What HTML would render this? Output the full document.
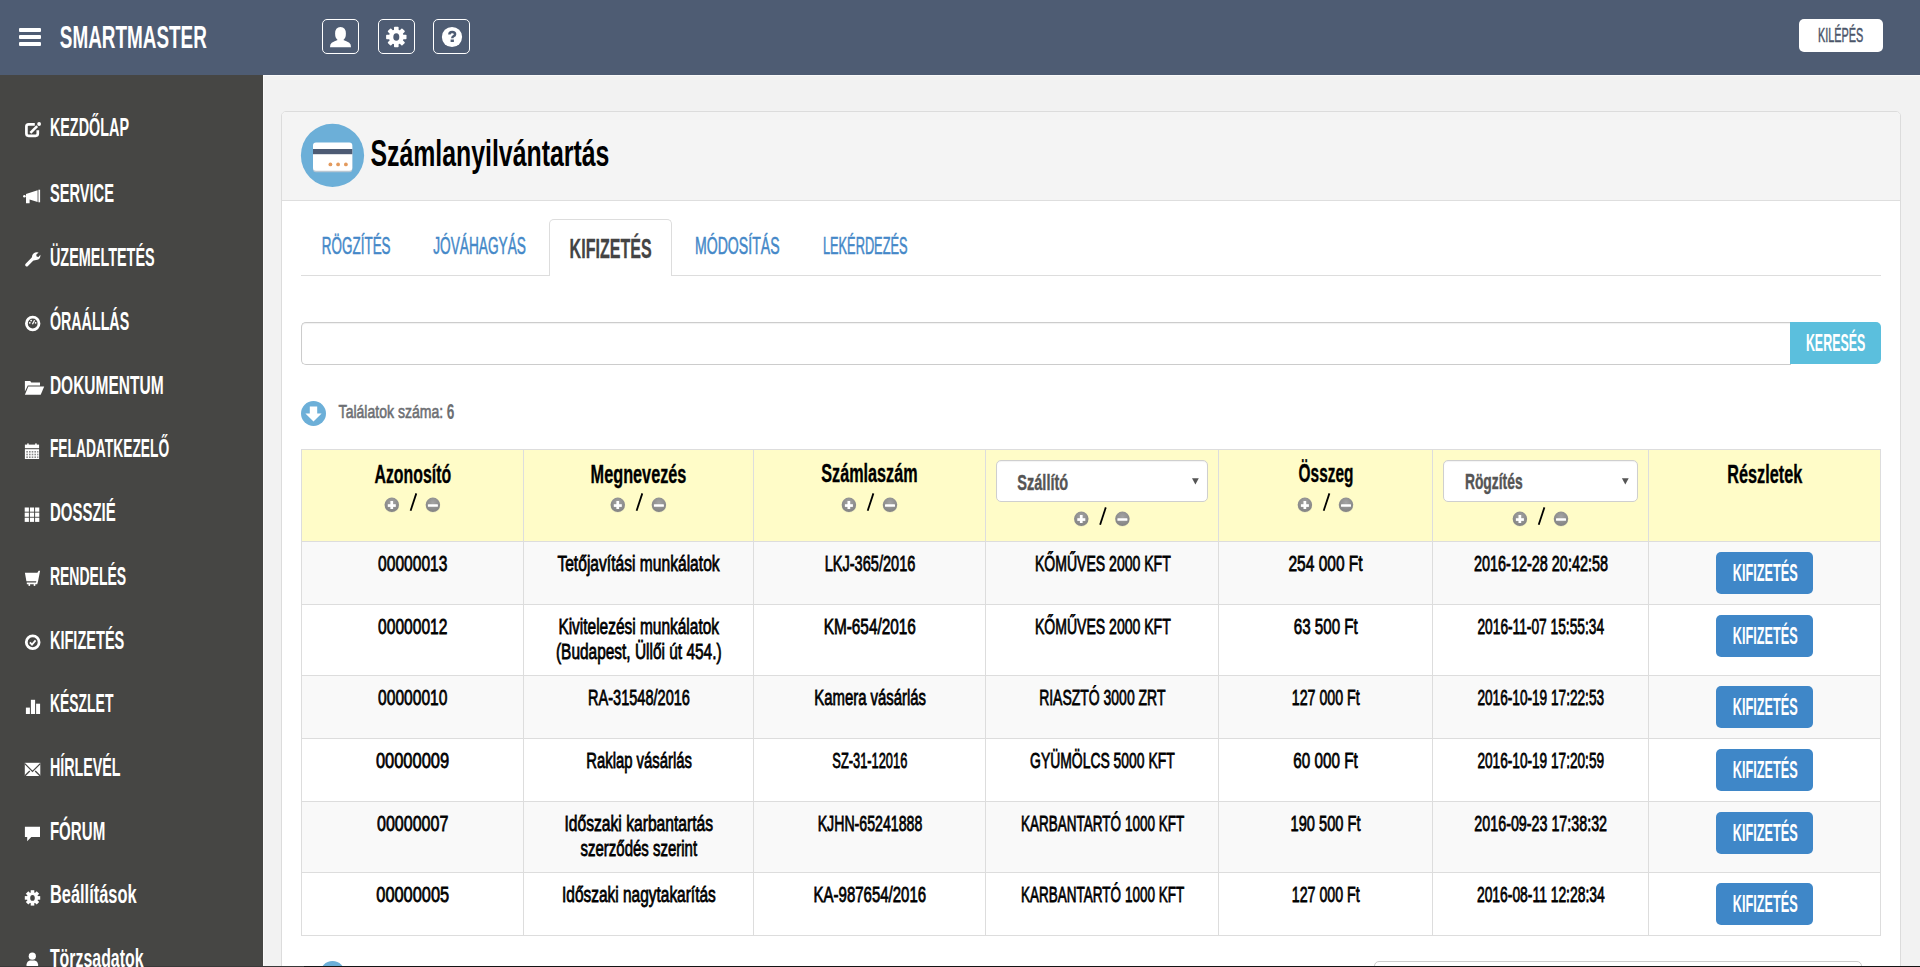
<!DOCTYPE html>
<html><head><meta charset="utf-8"><title>Számlanyilvántartás</title>
<style>
html,body{margin:0;padding:0;width:1920px;height:967px;overflow:hidden;background:#f2f2f2;font-family:"Liberation Sans",sans-serif}
.a{position:absolute;box-sizing:border-box}
.ib{border:1.8px solid #fff;border-radius:5px;width:37px;height:35.2px;top:18.7px}
.sel{background:#fff;border:1px solid #cfcfcf;border-radius:5px;box-shadow:inset 0 1px 1px rgba(0,0,0,.05)}
.btn{background:#3f87c8;border-radius:5px;width:97px;height:41.5px;left:1716px}
</style></head><body>
<!-- header -->
<div class="a" style="left:0;top:0;width:1920px;height:75px;background:#4e5c73"></div>
<div class="a" style="left:18.75px;top:28px;width:22.5px;height:4px;background:#fff;border-radius:1px"></div>
<div class="a" style="left:18.75px;top:35px;width:22.5px;height:4px;background:#fff;border-radius:1px"></div>
<div class="a" style="left:18.75px;top:42px;width:22.5px;height:4px;background:#fff;border-radius:1px"></div>
<div class="a ib" style="left:321.8px"></div>
<div class="a ib" style="left:377.8px"></div>
<div class="a ib" style="left:432.8px"></div>
<div class="a" style="left:1799px;top:19px;width:84px;height:33px;background:#fff;border-radius:5px"></div>
<!-- sidebar -->
<div class="a" style="left:0;top:75px;width:263px;height:892px;background:#464644"></div>
<div class="a" style="left:263px;top:75px;width:1657px;height:1px;background:#fafafa"></div>
<div class="a" style="left:263px;top:75px;width:1px;height:892px;background:#fafafa"></div>
<!-- panel -->
<div class="a" style="left:281px;top:111px;width:1620px;height:900px;background:#fff;border:1px solid #dcdcdc;border-radius:5px"></div>
<div class="a" style="left:282px;top:112px;width:1618px;height:89px;background:#f4f4f4;border-bottom:1px solid #dedede;border-radius:4px 4px 0 0"></div>
<!-- tabs -->
<div class="a" style="left:301px;top:275px;width:1580px;height:1px;background:#dddddd"></div>
<div class="a" style="left:549px;top:219px;width:123px;height:57px;background:#fff;border:1px solid #dddddd;border-bottom:none;border-radius:5px 5px 0 0"></div>
<!-- search -->
<div class="a" style="left:301px;top:322px;width:1490px;height:43px;background:#fff;border:1px solid #cccccc;border-right:none;border-radius:5px 0 0 5px;box-shadow:inset 0 1px 1px rgba(0,0,0,.06)"></div>
<div class="a" style="left:1790px;top:322px;width:91px;height:42px;background:#5bbfdd;border-radius:0 5px 5px 0"></div>
<!-- table -->
<div class="a" style="left:301px;top:449px;width:1580px;height:487px;background:#fff;border:1px solid #dddddd"></div>
<div class="a" style="left:302px;top:450px;width:1578px;height:91px;background:#fffcc8"></div>
<div class="a" style="left:302px;top:542px;width:1578px;height:62px;background:#f9f9f9"></div>
<div class="a" style="left:302px;top:676px;width:1578px;height:62px;background:#f9f9f9"></div>
<div class="a" style="left:302px;top:802px;width:1578px;height:70px;background:#f9f9f9"></div>
<div class="a" style="left:302px;top:541px;width:1578px;height:1px;background:#dddddd"></div>
<div class="a" style="left:302px;top:604px;width:1578px;height:1px;background:#dddddd"></div>
<div class="a" style="left:302px;top:675px;width:1578px;height:1px;background:#dddddd"></div>
<div class="a" style="left:302px;top:738px;width:1578px;height:1px;background:#dddddd"></div>
<div class="a" style="left:302px;top:801px;width:1578px;height:1px;background:#dddddd"></div>
<div class="a" style="left:302px;top:872px;width:1578px;height:1px;background:#dddddd"></div>
<div class="a" style="left:523px;top:450px;width:1px;height:485px;background:#dddddd"></div>
<div class="a" style="left:753px;top:450px;width:1px;height:485px;background:#dddddd"></div>
<div class="a" style="left:985px;top:450px;width:1px;height:485px;background:#dddddd"></div>
<div class="a" style="left:1218px;top:450px;width:1px;height:485px;background:#dddddd"></div>
<div class="a" style="left:1432px;top:450px;width:1px;height:485px;background:#dddddd"></div>
<div class="a" style="left:1648px;top:450px;width:1px;height:485px;background:#dddddd"></div>
<div class="a sel" style="left:996px;top:460px;width:212px;height:42px"></div>
<div class="a sel" style="left:1443px;top:460px;width:195px;height:42px"></div>
<div class="a btn" style="top:552px"></div>
<div class="a btn" style="top:615px"></div>
<div class="a btn" style="top:686px"></div>
<div class="a btn" style="top:749px"></div>
<div class="a btn" style="top:812px"></div>
<div class="a btn" style="top:883px"></div>
<!-- bottom partial -->
<div class="a" style="left:1374px;top:961px;width:488px;height:30px;background:#fff;border:1px solid #cccccc;border-radius:5px"></div>
<!-- icons + text overlay -->
<svg class="a" style="left:0;top:0" width="1920" height="967" viewBox="0 0 1920 967" font-family="Liberation Sans">
<defs>
<radialGradient id="gb" cx="50%" cy="35%" r="60%"><stop offset="0" stop-color="#a3a3a3"/><stop offset="1" stop-color="#858585"/></radialGradient>
<g id="pm">
 <circle cx="-20.6" cy="0.8" r="7.4" fill="#e8e6c0" opacity=".6"/>
 <circle cx="-20.6" cy="0" r="7.2" fill="url(#gb)"/>
 <rect x="-24.6" y="-0.6" width="8" height="2.7" fill="#fff"/>
 <rect x="-22" y="-3.8" width="2.7" height="8" fill="#fff"/>
 <line x1="-1.8" y1="5.9" x2="3.9" y2="-11.4" stroke="#000" stroke-width="1.8"/>
 <circle cx="20.5" cy="0.8" r="7.4" fill="#e8e6c0" opacity=".6"/>
 <circle cx="20.5" cy="0" r="7.2" fill="url(#gb)"/>
 <rect x="15.5" y="-0.6" width="10" height="2.6" rx="0.5" fill="#fff"/>
</g>
</defs>
<!-- header icons -->
<g fill="#fff">
 <path d="M330 47.2 L330.4 44.6 Q331 42.6 334.6 41.2 L337.6 39.9 Q335.1 38.2 335.1 33.6 Q335.1 26.9 340.5 26.9 Q345.9 26.9 345.9 33.6 Q345.9 38.2 343.4 39.9 L346.4 41.2 Q350 42.6 350.6 44.6 L351 47.2 Z"/>
 <g transform="translate(396.3 37)">
  <circle r="7.4"/>
  <rect x="-2.3" y="-10.2" width="4.6" height="20.4" rx="0.8"/>
  <rect x="-2.3" y="-10.2" width="4.6" height="20.4" rx="0.8" transform="rotate(45)"/>
  <rect x="-2.3" y="-10.2" width="4.6" height="20.4" rx="0.8" transform="rotate(90)"/>
  <rect x="-2.3" y="-10.2" width="4.6" height="20.4" rx="0.8" transform="rotate(135)"/>
  <ellipse rx="3" ry="3.8" fill="#4e5c73"/>
 </g>
 <circle cx="452" cy="37" r="10.1"/>
</g>
<path d="M449.4 34.4 Q449.4 31.9 452.2 31.9 Q455.1 31.9 455.1 34.2 Q455.1 35.6 453.3 36.3 Q452.3 36.7 452.3 38.2" fill="none" stroke="#4e5c73" stroke-width="2.5"/>
<rect x="450.6" y="39.5" width="3.3" height="2.5" fill="#4e5c73"/>
<!-- sidebar icons -->
<g fill="#fff" stroke="none">
 <!-- edit -->
 <path d="M34.8 124.4 H28.6 Q26.4 124.4 26.4 126.6 V133.6 Q26.4 135.8 28.6 135.8 H35.6 Q37.8 135.8 37.8 133.6 V130.2" fill="none" stroke="#fff" stroke-width="2.7"/>
 <path d="M30.4 132.9 L37.2 126.1" stroke="#fff" stroke-width="2.6"/>
 <circle cx="39.1" cy="124" r="1.9"/>
 <!-- megaphone -->
 <path d="M26 193.9 L37.6 190.2 V202 L29.6 199.4 V203.2 H26 Z"/>
 <rect x="38.4" y="189.7" width="1.7" height="12.6"/>
 <circle cx="24.4" cy="196.2" r="1.3"/>
 <!-- wrench -->
 <path d="M26.8 264.8 L33.2 258.4" stroke="#fff" stroke-width="3.3" stroke-linecap="round"/>
 <path d="M31.6 259.4 L32.2 255.6 Q33.2 252.4 36.8 252.2 L38.6 252.4 L36.2 254.8 L36.6 256.6 L38.4 257 L40.4 254.8 Q40.6 258.8 37.4 259.8 L33.8 260.6 Z"/>
 <!-- gauge -->
 <circle cx="32.7" cy="323.5" r="6.3" fill="none" stroke="#fff" stroke-width="2.8"/>
 <circle cx="29.8" cy="322.8" r="0.9"/><circle cx="31.1" cy="320.6" r="0.9"/><circle cx="35.6" cy="322.8" r="0.9"/>
 <path d="M32.4 324.3 L34.6 320.3" stroke="#fff" stroke-width="1.3"/>
 <!-- folder -->
 <path d="M24.9 381 H30.2 L31.3 382.4 H40 V385.6 H27.8 L24.9 391.6 Z"/>
 <path d="M28.3 386.4 H44.2 L40.7 394.8 H24.9 Z"/>
 <!-- calendar -->
 <rect x="24.9" y="444.6" width="14.2" height="3.6"/>
 <rect x="27.2" y="443.4" width="1.5" height="2"/><rect x="35.2" y="443.4" width="1.5" height="2"/>
 <rect x="24.9" y="449.2" width="14.2" height="9.8"/>
 <!-- grid -->
 <rect x="24.7" y="507.5" width="4.2" height="4.2"/><rect x="29.9" y="507.5" width="4.2" height="4.2"/><rect x="35.1" y="507.5" width="4.2" height="4.2"/>
 <rect x="24.7" y="512.6" width="4.2" height="4.2"/><rect x="29.9" y="512.6" width="4.2" height="4.2"/><rect x="35.1" y="512.6" width="4.2" height="4.2"/>
 <rect x="24.7" y="517.7" width="4.2" height="4.2"/><rect x="29.9" y="517.7" width="4.2" height="4.2"/><rect x="35.1" y="517.7" width="4.2" height="4.2"/>
 <!-- cart -->
 <path d="M24.9 572.8 H37.4 L38.6 570.8 H40.1 L38 581.4 L37.2 584.2 H26.8 V582.6 H36 L36.3 581.2 H26.4 Z"/>
 <rect x="28.5" y="584" width="1.6" height="1.9"/><rect x="33.7" y="584" width="1.6" height="1.9"/>
 <!-- check circle -->
 <circle cx="32.7" cy="642.3" r="6.4" fill="none" stroke="#fff" stroke-width="2.8"/>
 <path d="M29.9 642.3 L32 644.6 L35.6 640.4" fill="none" stroke="#fff" stroke-width="1.8"/>
 <!-- bar chart -->
 <rect x="25.9" y="707.6" width="4" height="6.4"/><rect x="30.9" y="699.8" width="4.2" height="14.2"/><rect x="36.1" y="703.7" width="4" height="10.3"/>
 <!-- envelope -->
 <rect x="24.8" y="762.8" width="15.5" height="13.2"/>
 <!-- comment -->
 <path d="M24.9 826.8 H40 V837 H31.3 L27.2 841.3 V837 H24.9 Z"/>
 <!-- gear -->
 <g transform="translate(32.5 897.9)">
  <circle r="5.6"/>
  <rect x="-1.8" y="-7.7" width="3.6" height="15.4"/>
  <rect x="-1.8" y="-7.7" width="3.6" height="15.4" transform="rotate(45)"/>
  <rect x="-1.8" y="-7.7" width="3.6" height="15.4" transform="rotate(90)"/>
  <rect x="-1.8" y="-7.7" width="3.6" height="15.4" transform="rotate(135)"/>
  <ellipse rx="2.3" ry="2.9" fill="#464644"/>
 </g>
 <!-- user -->
 <circle cx="32.3" cy="956.2" r="3.6"/>
 <path d="M26.5 967 V964.5 Q27 961.2 30 960.6 H34.6 Q37.6 961.2 38.1 964.5 V967 Z"/>
</g>
<g fill="none" stroke="#464644" stroke-width="1.3">
 <path d="M24.8 763.6 L32.5 771.4 L40.3 763.6"/>
 <path d="M24.8 776 L29.8 771"/><path d="M40.3 776 L35.2 771"/>
</g>
<g fill="#8a8a8a">
 <rect x="26.3" y="451" width="1.6" height="1.6"/><rect x="29" y="451" width="1.6" height="1.6"/><rect x="31.7" y="451" width="1.6" height="1.6"/><rect x="34.4" y="451" width="1.6" height="1.6"/><rect x="37.1" y="451" width="1.3" height="1.6"/>
 <rect x="26.3" y="453.7" width="1.6" height="1.6"/><rect x="29" y="453.7" width="1.6" height="1.6"/><rect x="31.7" y="453.7" width="1.6" height="1.6"/><rect x="34.4" y="453.7" width="1.6" height="1.6"/><rect x="37.1" y="453.7" width="1.3" height="1.6"/>
 <rect x="26.3" y="456.4" width="1.6" height="1.6"/><rect x="29" y="456.4" width="1.6" height="1.6"/><rect x="31.7" y="456.4" width="1.6" height="1.6"/><rect x="34.4" y="456.4" width="1.6" height="1.6"/><rect x="37.1" y="456.4" width="1.3" height="1.6"/>
</g>
<!-- title icon -->
<circle cx="332.5" cy="155.4" r="31.6" fill="#6cafd8"/>
<rect x="313" y="144" width="39.3" height="28.2" rx="3" fill="#b8c7d3"/>
<rect x="313" y="142.5" width="39.3" height="28.3" rx="3" fill="#fff"/>
<rect x="313" y="149" width="39.3" height="5.2" fill="#4d5b74"/>
<circle cx="330.4" cy="164.4" r="1.9" fill="#e39a5e"/><circle cx="338.1" cy="164.4" r="1.9" fill="#e39a5e"/><circle cx="345.9" cy="164.4" r="1.9" fill="#e39a5e"/>
<!-- results icon -->
<circle cx="313.5" cy="413.5" r="12.5" fill="#6cafd8"/>
<path d="M309.8 406.4 H317.2 V413.4 H321.6 L313.5 421.4 L305.4 413.4 H309.8 Z" fill="#fff"/>
<!-- select arrows -->
<path d="M1192 478.2 H1198.8 L1195.4 484.4 Z" fill="#555"/>
<path d="M1621.9 478.2 H1628.7 L1625.3 484.4 Z" fill="#555"/>
<!-- plus/minus -->
<use href="#pm" x="412.4" y="504.8"/>
<use href="#pm" x="638.4" y="504.8"/>
<use href="#pm" x="869.5" y="504.8"/>
<use href="#pm" x="1101.9" y="518.8"/>
<use href="#pm" x="1325.5" y="504.8"/>
<use href="#pm" x="1540.5" y="518.8"/>
<!-- bottom partial circle -->
<circle cx="332.5" cy="973.5" r="12.5" fill="#6cafd8"/>
<rect x="0" y="966" width="304" height="1" fill="#393939"/><rect x="304" y="966" width="1616" height="1" fill="#141414"/>
<text x="59.80" y="48.00" font-size="32.12" font-weight="bold" fill="#fff" textLength="147.06" lengthAdjust="spacingAndGlyphs">SMARTMASTER</text>
<text x="1818.04" y="41.75" font-size="19.77" font-weight="normal" fill="#4b5569" textLength="45.32" lengthAdjust="spacingAndGlyphs" stroke="#4b5569" stroke-width="0.5">KILÉPÉS</text>
<text x="49.90" y="136.10" font-size="25.58" font-weight="bold" fill="#fff" textLength="79.10" lengthAdjust="spacingAndGlyphs">KEZDŐLAP</text>
<text x="49.90" y="202.20" font-size="25.58" font-weight="bold" fill="#fff" textLength="64.03" lengthAdjust="spacingAndGlyphs">SERVICE</text>
<text x="49.90" y="266.10" font-size="25.58" font-weight="bold" fill="#fff" textLength="104.79" lengthAdjust="spacingAndGlyphs">ÜZEMELTETÉS</text>
<text x="49.90" y="329.70" font-size="25.58" font-weight="bold" fill="#fff" textLength="79.30" lengthAdjust="spacingAndGlyphs">ÓRAÁLLÁS</text>
<text x="49.90" y="394.10" font-size="25.58" font-weight="bold" fill="#fff" textLength="113.76" lengthAdjust="spacingAndGlyphs">DOKUMENTUM</text>
<text x="49.90" y="457.00" font-size="25.58" font-weight="bold" fill="#fff" textLength="119.27" lengthAdjust="spacingAndGlyphs">FELADATKEZELŐ</text>
<text x="49.90" y="521.10" font-size="25.58" font-weight="bold" fill="#fff" textLength="65.90" lengthAdjust="spacingAndGlyphs">DOSSZIÉ</text>
<text x="49.90" y="584.70" font-size="25.58" font-weight="bold" fill="#fff" textLength="76.31" lengthAdjust="spacingAndGlyphs">RENDELÉS</text>
<text x="49.90" y="648.80" font-size="25.58" font-weight="bold" fill="#fff" textLength="74.42" lengthAdjust="spacingAndGlyphs">KIFIZETÉS</text>
<text x="49.90" y="712.20" font-size="25.58" font-weight="bold" fill="#fff" textLength="63.51" lengthAdjust="spacingAndGlyphs">KÉSZLET</text>
<text x="49.90" y="775.80" font-size="25.58" font-weight="bold" fill="#fff" textLength="70.70" lengthAdjust="spacingAndGlyphs">HÍRLEVÉL</text>
<text x="49.90" y="839.60" font-size="25.58" font-weight="bold" fill="#fff" textLength="55.32" lengthAdjust="spacingAndGlyphs">FÓRUM</text>
<text x="49.90" y="903.40" font-size="25.58" font-weight="bold" fill="#fff" textLength="86.72" lengthAdjust="spacingAndGlyphs">Beállítások</text>
<text x="49.90" y="967.00" font-size="25.58" font-weight="bold" fill="#fff" textLength="93.63" lengthAdjust="spacingAndGlyphs">Törzsadatok</text>
<text x="370.40" y="166.00" font-size="36.63" font-weight="bold" fill="#000" textLength="238.92" lengthAdjust="spacingAndGlyphs">Számlanyilvántartás</text>
<text x="321.85" y="253.72" font-size="24.35" font-weight="normal" fill="#4488c8" textLength="68.72" lengthAdjust="spacingAndGlyphs" stroke="#4488c8" stroke-width="0.55">RÖGZÍTÉS</text>
<text x="433.15" y="253.72" font-size="24.35" font-weight="normal" fill="#4488c8" textLength="92.79" lengthAdjust="spacingAndGlyphs" stroke="#4488c8" stroke-width="0.55">JÓVÁHAGYÁS</text>
<text x="569.59" y="257.55" font-size="27.62" font-weight="bold" fill="#444" textLength="82.05" lengthAdjust="spacingAndGlyphs" stroke="#444" stroke-width="0.3">KIFIZETÉS</text>
<text x="694.96" y="253.72" font-size="24.35" font-weight="normal" fill="#4488c8" textLength="84.59" lengthAdjust="spacingAndGlyphs" stroke="#4488c8" stroke-width="0.55">MÓDOSÍTÁS</text>
<text x="822.94" y="253.72" font-size="24.35" font-weight="normal" fill="#4488c8" textLength="84.59" lengthAdjust="spacingAndGlyphs" stroke="#4488c8" stroke-width="0.55">LEKÉRDEZÉS</text>
<text x="1805.90" y="351.00" font-size="24.71" font-weight="bold" fill="#fff" textLength="59.39" lengthAdjust="spacingAndGlyphs">KERESÉS</text>
<text x="338.62" y="418.40" font-size="18.75" font-weight="normal" fill="#6d6f73" textLength="104.52" lengthAdjust="spacingAndGlyphs" stroke="#6d6f73" stroke-width="0.6">Találatok száma:</text>
<text x="446.70" y="419.00" font-size="21.51" font-weight="bold" fill="#6d6f73" textLength="7.62" lengthAdjust="spacingAndGlyphs">6</text>
<text x="374.51" y="482.93" font-size="24.93" font-weight="bold" fill="#000" textLength="76.59" lengthAdjust="spacingAndGlyphs" stroke="#000" stroke-width="0.35">Azonosító</text>
<text x="590.61" y="482.62" font-size="24.93" font-weight="bold" fill="#000" textLength="95.80" lengthAdjust="spacingAndGlyphs" stroke="#000" stroke-width="0.35">Megnevezés</text>
<text x="821.31" y="482.43" font-size="24.93" font-weight="bold" fill="#000" textLength="96.24" lengthAdjust="spacingAndGlyphs" stroke="#000" stroke-width="0.35">Számlaszám</text>
<text x="1298.61" y="482.32" font-size="24.93" font-weight="bold" fill="#000" textLength="54.82" lengthAdjust="spacingAndGlyphs" stroke="#000" stroke-width="0.35">Összeg</text>
<text x="1727.31" y="482.62" font-size="24.93" font-weight="bold" fill="#000" textLength="74.97" lengthAdjust="spacingAndGlyphs" stroke="#000" stroke-width="0.35">Részletek</text>
<text x="1017.33" y="489.50" font-size="22.09" font-weight="bold" fill="#555" textLength="50.84" lengthAdjust="spacingAndGlyphs" stroke="#555" stroke-width="0.4">Szállító</text>
<text x="1464.88" y="489.20" font-size="21.51" font-weight="bold" fill="#555" textLength="57.77" lengthAdjust="spacingAndGlyphs" stroke="#555" stroke-width="0.4">Rögzítés</text>
<text x="378.08" y="571.30" font-size="22.38" font-weight="normal" fill="#000" textLength="69.33" lengthAdjust="spacingAndGlyphs" stroke="#000" stroke-width="0.8">00000013</text>
<text x="557.38" y="571.30" font-size="22.38" font-weight="normal" fill="#000" textLength="162.25" lengthAdjust="spacingAndGlyphs" stroke="#000" stroke-width="0.8">Tetőjavítási munkálatok</text>
<text x="824.66" y="571.30" font-size="22.38" font-weight="normal" fill="#000" textLength="90.71" lengthAdjust="spacingAndGlyphs" stroke="#000" stroke-width="0.8">LKJ-365/2016</text>
<text x="1034.95" y="571.30" font-size="22.38" font-weight="normal" fill="#000" textLength="135.80" lengthAdjust="spacingAndGlyphs" stroke="#000" stroke-width="0.8">KŐMŰVES 2000 KFT</text>
<text x="1288.48" y="571.30" font-size="22.38" font-weight="normal" fill="#000" textLength="74.17" lengthAdjust="spacingAndGlyphs" stroke="#000" stroke-width="0.8">254 000 Ft</text>
<text x="1473.96" y="571.30" font-size="22.38" font-weight="normal" fill="#000" textLength="134.10" lengthAdjust="spacingAndGlyphs" stroke="#000" stroke-width="0.8">2016-12-28 20:42:58</text>
<text x="378.08" y="634.40" font-size="22.38" font-weight="normal" fill="#000" textLength="69.33" lengthAdjust="spacingAndGlyphs" stroke="#000" stroke-width="0.8">00000012</text>
<text x="558.38" y="634.40" font-size="22.38" font-weight="normal" fill="#000" textLength="160.65" lengthAdjust="spacingAndGlyphs" stroke="#000" stroke-width="0.8">Kivitelezési munkálatok</text>
<text x="555.98" y="658.60" font-size="22.38" font-weight="normal" fill="#000" textLength="165.62" lengthAdjust="spacingAndGlyphs" stroke="#000" stroke-width="0.8">(Budapest, Üllői út 454.)</text>
<text x="823.67" y="634.40" font-size="22.38" font-weight="normal" fill="#000" textLength="92.24" lengthAdjust="spacingAndGlyphs" stroke="#000" stroke-width="0.8">KM-654/2016</text>
<text x="1034.95" y="634.40" font-size="22.38" font-weight="normal" fill="#000" textLength="135.80" lengthAdjust="spacingAndGlyphs" stroke="#000" stroke-width="0.8">KŐMŰVES 2000 KFT</text>
<text x="1293.77" y="634.40" font-size="22.38" font-weight="normal" fill="#000" textLength="63.96" lengthAdjust="spacingAndGlyphs" stroke="#000" stroke-width="0.8">63 500 Ft</text>
<text x="1477.45" y="634.40" font-size="22.38" font-weight="normal" fill="#000" textLength="126.63" lengthAdjust="spacingAndGlyphs" stroke="#000" stroke-width="0.8">2016-11-07 15:55:34</text>
<text x="378.08" y="705.00" font-size="22.38" font-weight="normal" fill="#000" textLength="69.33" lengthAdjust="spacingAndGlyphs" stroke="#000" stroke-width="0.8">00000010</text>
<text x="588.06" y="705.00" font-size="22.38" font-weight="normal" fill="#000" textLength="101.89" lengthAdjust="spacingAndGlyphs" stroke="#000" stroke-width="0.8">RA-31548/2016</text>
<text x="814.27" y="705.00" font-size="22.38" font-weight="normal" fill="#000" textLength="111.74" lengthAdjust="spacingAndGlyphs" stroke="#000" stroke-width="0.8">Kamera vásárlás</text>
<text x="1039.15" y="705.00" font-size="22.38" font-weight="normal" fill="#000" textLength="126.30" lengthAdjust="spacingAndGlyphs" stroke="#000" stroke-width="0.8">RIASZTÓ 3000 ZRT</text>
<text x="1291.75" y="705.00" font-size="22.38" font-weight="normal" fill="#000" textLength="68.01" lengthAdjust="spacingAndGlyphs" stroke="#000" stroke-width="0.8">127 000 Ft</text>
<text x="1477.44" y="705.00" font-size="22.38" font-weight="normal" fill="#000" textLength="126.63" lengthAdjust="spacingAndGlyphs" stroke="#000" stroke-width="0.8">2016-10-19 17:22:53</text>
<text x="375.89" y="768.30" font-size="22.38" font-weight="normal" fill="#000" textLength="73.30" lengthAdjust="spacingAndGlyphs" stroke="#000" stroke-width="0.8">00000009</text>
<text x="586.27" y="768.30" font-size="22.38" font-weight="normal" fill="#000" textLength="105.66" lengthAdjust="spacingAndGlyphs" stroke="#000" stroke-width="0.8">Raklap vásárlás</text>
<text x="832.33" y="768.30" font-size="22.38" font-weight="normal" fill="#000" textLength="74.97" lengthAdjust="spacingAndGlyphs" stroke="#000" stroke-width="0.8">SZ-31-12016</text>
<text x="1030.05" y="768.30" font-size="22.38" font-weight="normal" fill="#000" textLength="144.73" lengthAdjust="spacingAndGlyphs" stroke="#000" stroke-width="0.8">GYÜMÖLCS 5000 KFT</text>
<text x="1293.27" y="768.30" font-size="22.38" font-weight="normal" fill="#000" textLength="64.46" lengthAdjust="spacingAndGlyphs" stroke="#000" stroke-width="0.8">60 000 Ft</text>
<text x="1477.44" y="768.30" font-size="22.38" font-weight="normal" fill="#000" textLength="126.63" lengthAdjust="spacingAndGlyphs" stroke="#000" stroke-width="0.8">2016-10-19 17:20:59</text>
<text x="376.99" y="831.40" font-size="22.38" font-weight="normal" fill="#000" textLength="71.32" lengthAdjust="spacingAndGlyphs" stroke="#000" stroke-width="0.8">00000007</text>
<text x="564.48" y="831.40" font-size="22.38" font-weight="normal" fill="#000" textLength="148.64" lengthAdjust="spacingAndGlyphs" stroke="#000" stroke-width="0.8">Időszaki karbantartás</text>
<text x="580.57" y="856.10" font-size="22.38" font-weight="normal" fill="#000" textLength="116.48" lengthAdjust="spacingAndGlyphs" stroke="#000" stroke-width="0.8">szerződés szerint</text>
<text x="817.65" y="831.40" font-size="22.38" font-weight="normal" fill="#000" textLength="104.68" lengthAdjust="spacingAndGlyphs" stroke="#000" stroke-width="0.8">KJHN-65241888</text>
<text x="1021.04" y="831.40" font-size="22.38" font-weight="normal" fill="#000" textLength="163.19" lengthAdjust="spacingAndGlyphs" stroke="#000" stroke-width="0.8">KARBANTARTÓ 1000 KFT</text>
<text x="1290.56" y="831.40" font-size="22.38" font-weight="normal" fill="#000" textLength="70.00" lengthAdjust="spacingAndGlyphs" stroke="#000" stroke-width="0.8">190 500 Ft</text>
<text x="1474.36" y="831.40" font-size="22.38" font-weight="normal" fill="#000" textLength="132.70" lengthAdjust="spacingAndGlyphs" stroke="#000" stroke-width="0.8">2016-09-23 17:38:32</text>
<text x="376.29" y="902.20" font-size="22.38" font-weight="normal" fill="#000" textLength="72.90" lengthAdjust="spacingAndGlyphs" stroke="#000" stroke-width="0.8">00000005</text>
<text x="562.08" y="902.20" font-size="22.38" font-weight="normal" fill="#000" textLength="153.65" lengthAdjust="spacingAndGlyphs" stroke="#000" stroke-width="0.8">Időszaki nagytakarítás</text>
<text x="813.57" y="902.20" font-size="22.38" font-weight="normal" fill="#000" textLength="112.49" lengthAdjust="spacingAndGlyphs" stroke="#000" stroke-width="0.8">KA-987654/2016</text>
<text x="1021.04" y="902.20" font-size="22.38" font-weight="normal" fill="#000" textLength="163.19" lengthAdjust="spacingAndGlyphs" stroke="#000" stroke-width="0.8">KARBANTARTÓ 1000 KFT</text>
<text x="1291.75" y="902.20" font-size="22.38" font-weight="normal" fill="#000" textLength="68.01" lengthAdjust="spacingAndGlyphs" stroke="#000" stroke-width="0.8">127 000 Ft</text>
<text x="1476.95" y="902.20" font-size="22.38" font-weight="normal" fill="#000" textLength="127.73" lengthAdjust="spacingAndGlyphs" stroke="#000" stroke-width="0.8">2016-08-11 12:28:34</text>
<text x="1732.70" y="581.10" font-size="23.11" font-weight="bold" fill="#fff" textLength="65.02" lengthAdjust="spacingAndGlyphs">KIFIZETÉS</text>
<text x="1732.70" y="644.30" font-size="23.11" font-weight="bold" fill="#fff" textLength="65.02" lengthAdjust="spacingAndGlyphs">KIFIZETÉS</text>
<text x="1732.70" y="714.90" font-size="23.11" font-weight="bold" fill="#fff" textLength="65.02" lengthAdjust="spacingAndGlyphs">KIFIZETÉS</text>
<text x="1732.70" y="778.30" font-size="23.11" font-weight="bold" fill="#fff" textLength="65.02" lengthAdjust="spacingAndGlyphs">KIFIZETÉS</text>
<text x="1732.70" y="841.40" font-size="23.11" font-weight="bold" fill="#fff" textLength="65.02" lengthAdjust="spacingAndGlyphs">KIFIZETÉS</text>
<text x="1732.70" y="912.10" font-size="23.11" font-weight="bold" fill="#fff" textLength="65.02" lengthAdjust="spacingAndGlyphs">KIFIZETÉS</text>
</svg>
</body></html>
